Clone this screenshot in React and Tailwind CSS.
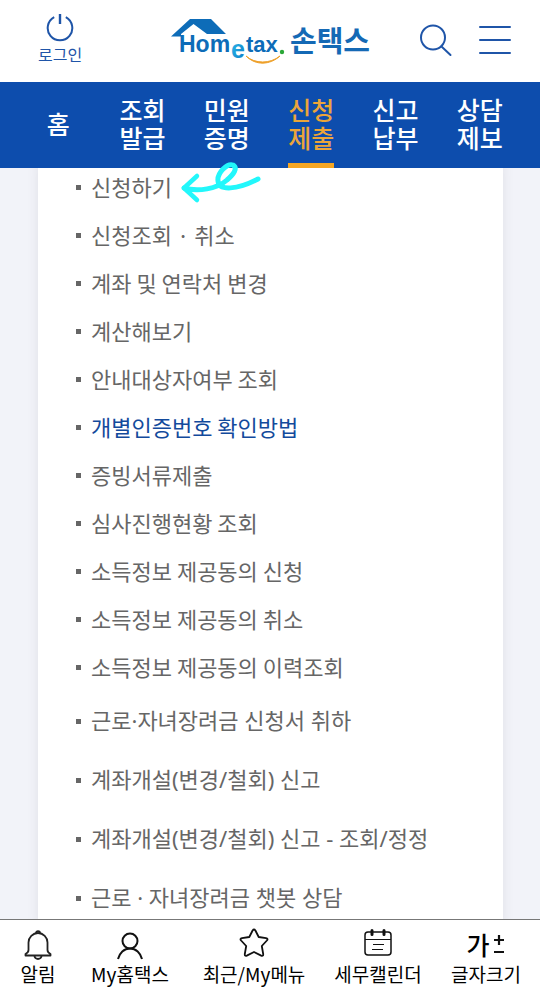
const tabs = [
  { label: '홈' },
  { label: '조회\n발급' },
  { label: '민원\n증명' },
  { label: '신청\n제출', active: true },
  { label: '신고\n납부' },
  { label: '상담\n제보' },
]

const services = [
  { label: '신청하기' },
  { label: '신청조회 · 취소' },
  { label: '계좌 및 연락처 변경' },
  { label: '계산해보기' },
  { label: '안내대상자여부 조회' },
  { label: '개별인증번호 확인방법', highlight: true },
  { label: '증빙서류제출' },
  { label: '심사진행현황 조회' },
  { label: '소득정보 제공동의 신청' },
  { label: '소득정보 제공동의 취소' },
  { label: '소득정보 제공동의 이력조회' },
]

const extraServices = [
  { label: '근로·자녀장려금 신청서 취하' },
  { label: '계좌개설(변경/철회) 신고' },
  { label: '계좌개설(변경/철회) 신고 - 조회/정정' },
  { label: '근로 · 자녀장려금 챗봇 상담' },
]

function PowerIcon() {
  return (
    <svg width="28" height="29" viewBox="0 0 28 29" fill="none" stroke="#1f55a8" strokeWidth="2" aria-hidden="true">
      <path d="M8.2 4.2A12.3 12.3 0 1 0 19.8 4.2" />
      <path d="M14 1v10" strokeWidth="2.4" />
    </svg>
  )
}

function Logo() {
  return (
    <svg width="201" height="48" viewBox="0 0 201 48" role="img" aria-label="Hometax 손택스">
      <defs>
        <linearGradient id="logo-e" x1="0" y1="0" x2="1" y2="1">
          <stop offset="0" stopColor="#2fc0ee" />
          <stop offset="1" stopColor="#0a78c4" />
        </linearGradient>
      </defs>
      <path d="M1 20.500 20 3h21l15 15H37L23.500 8 11 18v2.500z" fill="#0d6cb8" />
      <g fontFamily="'Liberation Sans', sans-serif" fontWeight="700" fill="#0d6cb8">
        <text x="9" y="36" fontSize="23">Hom</text>
        <text x="61" y="42" fontSize="25" fill="url(#logo-e)">e</text>
        <text x="76" y="36" fontSize="22">tax</text>
      </g>
      <circle cx="112" cy="36" r="2.2" fill="#2aa737" />
      <path d="M76 40c9 8 24 8 34 0-10 9-24 10-34 0z" fill="#eea029" stroke="#eea029" />
      <text x="120" y="36" fontSize="29" fontWeight="700" fill="#1469b5" fontFamily="'Noto Sans CJK KR', sans-serif">손택스</text>
    </svg>
  )
}

function SearchIcon() {
  return (
    <svg width="34" height="34" viewBox="0 0 34 34" fill="none" stroke="#1f55a8" strokeWidth="2" strokeLinecap="round" aria-hidden="true">
      <circle cx="14" cy="14.500" r="12" />
      <path d="m22.500 23.500 9 8.500" />
    </svg>
  )
}

function MenuIcon() {
  return (
    <svg width="32" height="28" viewBox="0 0 32 28" fill="none" stroke="#1f55a8" strokeWidth="2" strokeLinecap="round" aria-hidden="true">
      <path d="M1 1h30M1 14h30M1 27h30" />
    </svg>
  )
}

// Hand-drawn pointer next to the first service, laid over the tab bar edge
function HandArrow() {
  return (
    <svg className="pointer-events-none absolute top-[78px] left-[178px] z-10" width="86" height="46" viewBox="0 0 86 46" fill="none" stroke="#22f7fb" strokeLinecap="round" strokeLinejoin="round" aria-hidden="true">
      <path d="M6 28c14 4 33 1 43-8 7-6 11-12 6-15-6-2-16 8-15 16 1 10 19 9 40-2" strokeWidth="5" />
      <path d="M19 16 6 28l13 12" strokeWidth="4.500" />
    </svg>
  )
}

function BellIcon() {
  return (
    <svg width="28" height="30" viewBox="0 0 28 30" fill="none" stroke="#222" strokeWidth="1.800" strokeLinejoin="round" aria-hidden="true">
      <path d="M4.500 12.500a9.500 9.500 0 0 1 19 0V20c0 2 1 3 3 4v1.500h-25V24c2-1 3-2 3-4z" />
      <path d="M12 3a2 1.800 0 0 1 4 0M10.500 26a3.500 3 0 0 0 7 0" />
    </svg>
  )
}

function PersonIcon() {
  return (
    <svg width="28" height="28" viewBox="0 0 28 28" fill="none" stroke="#111" strokeWidth="2" aria-hidden="true">
      <circle cx="14" cy="9" r="7.500" />
      <path d="M2 27c1.500-6 6-10.500 12-10.500S24.500 21 26 27" />
    </svg>
  )
}

function StarIcon() {
  return (
    <svg width="30" height="30" viewBox="0 0 30 30" fill="none" stroke="#111" strokeWidth="1.800" strokeLinejoin="round" aria-hidden="true">
      <path d="M13.600 2.500Q15 .5 16.400 2.500l3.300 6.500 7.300 1.100q2.500.5.900 2.400L22.800 18l1.400 8q.2 2.500-2 1.600L15 24l-7.200 3.600q-2.200.9-2-1.600l1.400-8-5.100-5.500Q.5 10.600 3 10.100L10.300 9z" />
    </svg>
  )
}

function CalendarIcon() {
  return (
    <svg width="28" height="29" viewBox="0 0 28 29" fill="none" stroke="#111" aria-hidden="true">
      <rect x="1" y="4" width="26" height="23" rx="3" strokeWidth="1.500" />
      <path d="M1 11.500h26M9 16.500h11M8 21.500h11" strokeWidth="1" />
      <path d="M8 2.500v4M20 2.500v4" strokeWidth="3" strokeLinecap="round" />
    </svg>
  )
}

function FontSizeIcon() {
  return (
    <span className="flex items-center gap-1 text-[25px] leading-8 font-medium" aria-hidden="true">
      가
      <svg width="12" height="20" viewBox="0 0 12 20" fill="none" stroke="#111" strokeWidth="2.200">
        <path d="M0 6h10M5 1v10M0 18h10" />
      </svg>
    </span>
  )
}

const shortcuts = [
  { label: '알림', Icon: BellIcon, align: 'items-end' },
  { label: 'My홈택스', Icon: PersonIcon, align: 'items-end' },
  { label: '최근/My메뉴', Icon: StarIcon, align: 'items-start' },
  { label: '세무캘린더', Icon: CalendarIcon, align: 'items-start' },
  { label: '글자크기', Icon: FontSizeIcon, align: 'items-start' },
]

function ServiceItem({ label, highlight, tall }) {
  return (
    <li className={`flex items-center gap-[10px] ${tall ? "h-[59px] pt-[2px] font-['Noto_Sans','Noto_Sans_CJK_KR',sans-serif]" : 'h-12'}`}>
      <span className="size-[5px] shrink-0 bg-[#666]" />
      <a href="#" className={`pb-[3px] text-[22px] leading-8 whitespace-nowrap ${highlight ? 'text-[#134a9c]' : 'text-[#666]'}`}>
        {label}
      </a>
    </li>
  )
}

export default function App() {
  return (
    <div className="flex h-screen flex-col bg-white font-['Noto_Sans_CJK_KR',sans-serif]">
      <header className="grid h-[82px] shrink-0 grid-cols-[1fr_auto_1fr] items-center pb-[2px]">
        <button type="button" className="ml-[38px] flex flex-col items-center justify-self-start pb-[2px] text-base leading-6 text-[#1f55a8]">
          <PowerIcon />
          로그인
        </button>
        <a href="#">
          <Logo />
        </a>
        <div className="mr-[29px] flex items-center gap-[26px] justify-self-end">
          <button type="button" aria-label="검색">
            <SearchIcon />
          </button>
          <button type="button" aria-label="전체메뉴">
            <MenuIcon />
          </button>
        </div>
      </header>

      <nav className="relative grid h-[86px] shrink-0 grid-cols-6 bg-[#0d4dad] pr-[18px] pl-4">
        {tabs.map(({ label, active }) => (
          <a
            key={label}
            href="#"
            aria-current={active ? 'page' : undefined}
            className={`flex items-center justify-self-center border-b-[5px] text-[25px] leading-7 font-medium whitespace-pre-line ${
              active ? 'border-b-[#f5a623] text-[#eba53a]' : 'border-b-transparent text-white'
            }`}
          >
            {label}
          </a>
        ))}
        <HandArrow />
      </nav>

      <main className="min-h-0 flex-1 overflow-hidden bg-[#f2f3f9] pr-[37px] pl-[38px]">
        <div className="bg-white pl-[38px] shadow-[0_0_12px_rgba(0,0,0,0.08)]">
          <ul className="-mt-[5px]">
            {services.map((item) => (
              <ServiceItem key={item.label} {...item} />
            ))}
            {extraServices.map((item) => (
              <ServiceItem key={item.label} {...item} tall />
            ))}
          </ul>
        </div>
      </main>

      <footer className="grid h-[77px] shrink-0 grid-cols-[76fr_108fr_140fr_108fr_108fr] border-t border-[#777] bg-white">
        {shortcuts.map(({ label, Icon, align }) => (
          <button key={label} type="button" className="flex flex-col items-center pt-2 text-[19px] leading-7 whitespace-nowrap text-black">
            <span className={`flex h-8 ${align}`}>
              <Icon />
            </span>
            {label}
          </button>
        ))}
      </footer>
    </div>
  )
}
